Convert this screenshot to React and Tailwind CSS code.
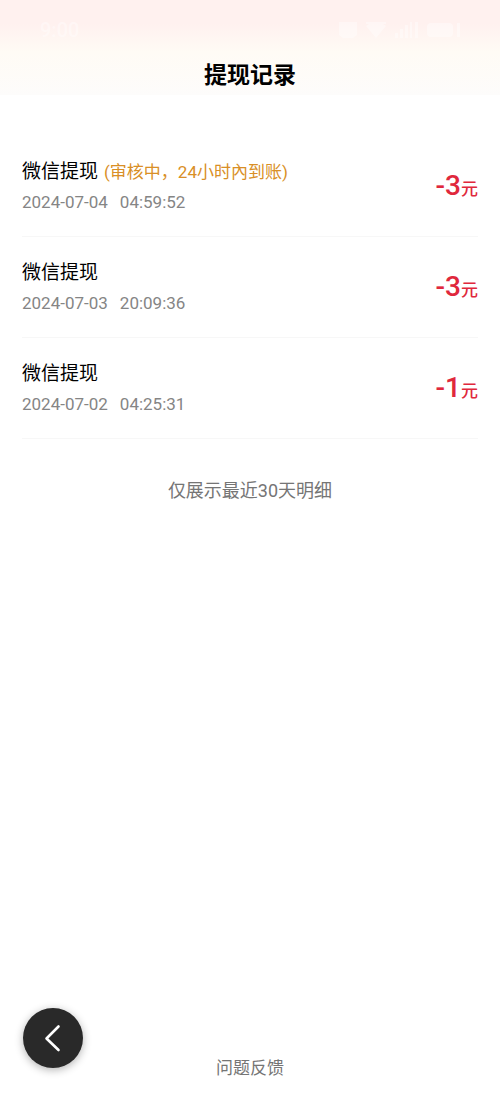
import React from 'react';

const records = [
    {
        id: 1,
        title: '微信提现',
        status: '(审核中，24小时內到账)',
        date: '2024-07-04',
        time: '04:59:52',
        amount: '-3',
    },
    {
        id: 2,
        title: '微信提现',
        date: '2024-07-03',
        time: '20:09:36',
        amount: '-3',
    },
    {
        id: 3,
        title: '微信提现',
        date: '2024-07-02',
        time: '04:25:31',
        amount: '-1',
    },
];

function StatusBar() {
    return (
        <div className="flex h-[60px] items-center justify-between pl-10 pr-9 text-white/40">
            <span className="text-[20px] font-medium">9:00</span>
            <svg width="126" height="20" viewBox="0 0 126 20" fill="currentColor" aria-hidden="true">
                <path d="M1 2h18v13l-4 3H5l-4-3z" />
                <path d="M28 6q10-8 20 0l-10 12zM28 2h20v2H28z" />
                <path d="M57 13h3v5h-3zM62 9h3v9h-3zM67 5h3v13h-3zM72 2h2v16h-2zM77 2h3v16h-3z" />
                <rect x="89" y="3" width="26" height="14" rx="4" />
                <path d="M119 3h3v14h-3z" />
            </svg>
        </div>
    );
}

function Header() {
    return (
        <header className="h-[95px] bg-linear-to-b from-[#fff1ef] from-25% via-[#fffbf5] via-55% to-[#fdfcfb]">
            <StatusBar />
            <h1 className="text-center text-[23px] leading-8 font-bold text-black">
                提现记录
            </h1>
        </header>
    );
}

function RecordItem({ record }) {
    return (
        <li className="flex items-center justify-between border-b border-[#f7f7f7] pt-[22px] pb-[20px]">
            <div>
                <h2 className="text-[19px] leading-7 text-black">
                    {record.title}
                    {record.status && (
                        <span className="ml-[6px] text-[17px] text-[#d98f26]">
                            {record.status}
                        </span>
                    )}
                </h2>
                <p className="mt-[2px] flex gap-3 text-[17px] leading-7 text-[#858585]">
                    <span>{record.date}</span>
                    <span>{record.time}</span>
                </p>
            </div>
            <p className="text-[28px] leading-8 font-medium text-[#e0283c]">
                {record.amount}
                <span className="text-[17px]">元</span>
            </p>
        </li>
    );
}

function App() {
    return (
        <div className="flex min-h-screen flex-col bg-white font-[Roboto,'Noto_Sans_CJK_SC',sans-serif]">
            <Header />

            <main className="px-[22px] pt-[41px]">
                <ul>
                    {records.map((record) => (
                        <RecordItem key={record.id} record={record} />
                    ))}
                </ul>
                <p className="mt-10 text-center text-[18px] leading-6 text-[#757575]">
                    仅展示最近30天明细
                </p>
            </main>

            <footer className="mt-auto grid grid-cols-[1fr_auto_1fr] items-end px-[23px] pb-[37px]">
                <button
                    type="button"
                    aria-label="返回"
                    className="mb-3 flex size-[60px] items-center justify-center rounded-full bg-[#292929] shadow-[0_2px_8px_rgba(0,0,0,0.3)]"
                >
                    <svg
                        width="60"
                        height="60"
                        viewBox="0 0 60 60"
                        fill="none"
                        stroke="white"
                        strokeWidth="2.6"
                        strokeLinecap="round"
                        strokeLinejoin="round"
                    >
                        <path d="M35.5 18.5 23.5 30.5 35.5 42" />
                    </svg>
                </button>
                <a href="#" className="text-[17px] leading-6 text-[#757575]">
                    问题反馈
                </a>
            </footer>
        </div>
    );
}

export default App;
